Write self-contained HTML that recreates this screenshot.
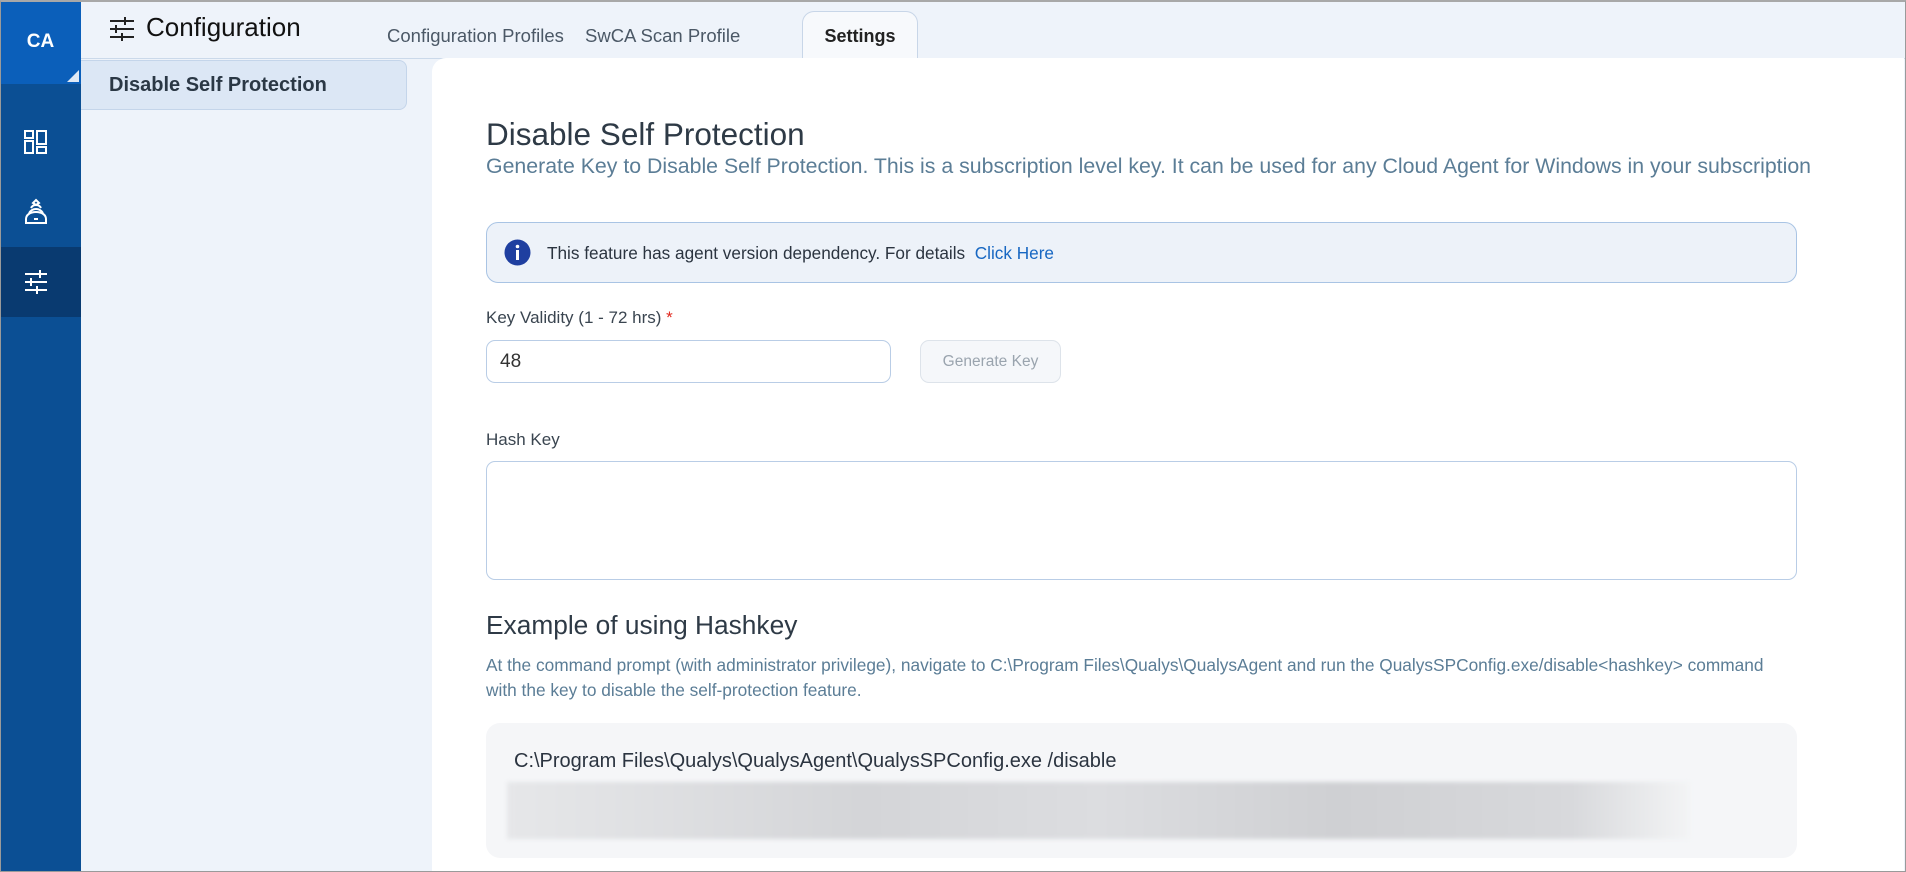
<!DOCTYPE html>
<html><head><meta charset="utf-8"><style>
*{margin:0;padding:0;box-sizing:border-box}
body{width:1906px;height:872px;overflow:hidden;font-family:"Liberation Sans",Arial,sans-serif;background:#eef3fa;position:relative;color:#2c3640}
.frame{position:absolute;inset:0;border:1px solid #9a9a9a;border-top:2px solid #a8a8a8;pointer-events:none;z-index:10}
.side{position:absolute;left:0;top:0;width:81px;height:872px;background:#0b4f94;z-index:5}
.ca{position:absolute;left:0;top:0;width:81px;height:84px;background:#0b5fba;color:#fff;font-weight:bold;font-size:19px;text-align:center;line-height:84px}
.ca:after{content:"";position:absolute;right:2px;bottom:2px;border-left:12px solid transparent;border-bottom:12px solid #dfe9f5}
.sel{position:absolute;left:0;top:247px;width:81px;height:70px;background:#093a70}
.ic{position:absolute;left:22px}
.abs{position:absolute;white-space:nowrap}
.card{position:absolute;left:432px;top:58px;right:2px;bottom:0;background:#fff;border-top-left-radius:14px}
</style></head><body>
<div class="side">
<div class="ca">CA</div>
<svg class="ic" style="top:128px" width="28" height="28" viewBox="0 0 28 28" fill="none" stroke="#fff" stroke-width="2"><rect x="3" y="3" width="8" height="7"/><rect x="3" y="13" width="8" height="12"/><rect x="15" y="3" width="9" height="13"/><rect x="15" y="19" width="9" height="6"/></svg>
<svg class="ic" style="top:197px" width="28" height="30" viewBox="0 0 28 30" fill="none" stroke="#fff" stroke-width="2"><path d="M14 3l3 3-3 2-3-2z"/><path d="M9 11c1-2 3-3 5-3s4 1 5 3"/><path d="M7 16c2-3 4-4 7-4s5 1 7 4"/><path d="M4 26v-4c0-4 4-7 10-7s10 3 10 7v4z"/><path d="M12 22h4"/></svg>
<div class="sel"></div>
<svg class="ic" style="top:268px" width="28" height="28" viewBox="0 0 28 28" fill="none" stroke="#fff" stroke-width="2"><path d="M3 6h22M3 14h22M3 22h22"/><path d="M18 2v8M9 10v8M15 18v8"/></svg>
</div>
<svg class="abs" style="left:109px;top:17px" width="26" height="24" viewBox="0 0 26 24" fill="none" stroke="#222" stroke-width="2"><path d="M1 4h24M1 12h24M1 20h24"/><path d="M16 0v8M7 8v8M13 16v8"/></svg>
<div class="abs" style="left:146px;top:12px;font-size:26px;color:#111">Configuration</div>
<div class="abs" style="left:387px;top:25px;font-size:18.5px;color:#4b5866">Configuration Profiles</div>
<div class="abs" style="left:585px;top:25px;font-size:18.5px;color:#4b5866">SwCA Scan Profile</div>
<div class="abs" style="left:802px;top:11px;width:116px;height:50px;background:#f7f9fc;border:1px solid #c8d6e8;border-bottom:none;border-radius:12px 12px 0 0;text-align:center;font-size:18px;font-weight:bold;line-height:48px;color:#222">Settings</div>
<div class="abs" style="left:81px;top:58px;width:1825px;height:1px;background:#cbd9ea"></div>
<div class="abs" style="left:81px;top:60px;width:326px;height:50px;background:#dce7f5;border:1px solid #c4d5ea;border-left:none;border-radius:0 8px 8px 0;font-size:20px;font-weight:bold;line-height:48px;padding-left:28px;color:#2b3845">Disable Self Protection</div>
<div class="card"></div>
<div class="abs" style="left:486px;top:116px;font-size:31.5px;color:#2e3a46">Disable Self Protection</div>
<div class="abs" style="left:486px;top:154px;font-size:21.3px;color:#5b7d96">Generate Key to Disable Self Protection. This is a subscription level key. It can be used for any Cloud Agent for Windows in your subscription</div>
<div class="abs" style="left:486px;top:222px;width:1311px;height:61px;background:#edf2f9;border:1px solid #a9c4e4;border-radius:12px"></div>
<svg class="abs" style="left:504px;top:239px" width="27" height="27" viewBox="0 0 27 27"><circle cx="13.5" cy="13.5" r="13" fill="#1f3fa0"/><circle cx="13.5" cy="7.5" r="1.8" fill="#fff"/><rect x="12" y="11" width="3" height="10" fill="#fff"/></svg>
<div class="abs" style="left:547px;top:243px;font-size:17.2px;color:#2b3440">This feature has agent version dependency. For details &nbsp;<span style="color:#1767c2">Click Here</span></div>
<div class="abs" style="left:486px;top:308px;font-size:17px;color:#3a4550">Key Validity (1 - 72 hrs) <span style="color:#e0261c">*</span></div>
<div class="abs" style="left:486px;top:340px;width:405px;height:43px;border:1px solid #b9cde6;border-radius:9px;font-size:19px;line-height:41px;padding-left:13px;color:#333">48</div>
<div class="abs" style="left:920px;top:340px;width:141px;height:43px;border:1px solid #dde3ea;background:#f5f7fa;border-radius:9px;font-size:15.5px;line-height:41px;text-align:center;color:#9aa4ae">Generate Key</div>
<div class="abs" style="left:486px;top:430px;font-size:17px;color:#3a4550">Hash Key</div>
<div class="abs" style="left:486px;top:461px;width:1311px;height:119px;border:1px solid #b9cde6;border-radius:9px"></div>
<div class="abs" style="left:486px;top:610px;font-size:26.3px;color:#2e3a46">Example of using Hashkey</div>
<div class="abs" style="left:486px;top:653px;font-size:17.3px;line-height:25px;color:#5b7d96">At the command prompt (with administrator privilege), navigate to C:\Program Files\Qualys\QualysAgent and run the QualysSPConfig.exe/disable&lt;hashkey&gt; command<br>with the key to disable the self-protection feature.</div>
<div class="abs" style="left:486px;top:723px;width:1311px;height:135px;background:#f5f6f8;border-radius:14px"></div>
<div class="abs" style="left:514px;top:750px;font-size:20px;color:#2b3440">C:\Program Files\Qualys\QualysAgent\QualysSPConfig.exe /disable</div>
<div class="abs" style="left:507px;top:782px;width:1183px;height:57px;background:linear-gradient(90deg,#e6e7e9,#d4d5d8 30%,#dcdde0 50%,#cfd0d3 70%,#d8d9dc 90%,#f3f4f5);filter:blur(2px)"></div>
<div class="frame"></div>
</body></html>
